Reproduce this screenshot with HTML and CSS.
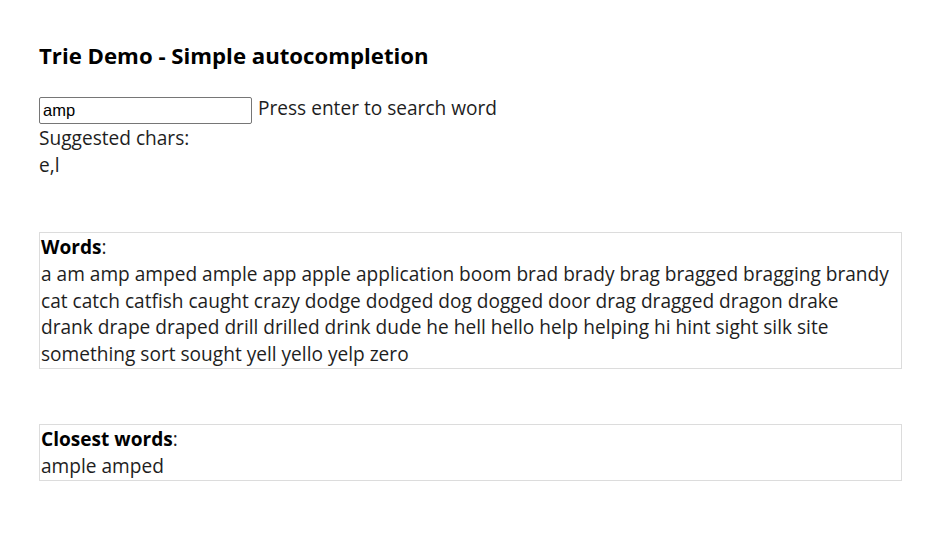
FILE: index.html
```html
<!DOCTYPE html>
<html>
<head>
<meta charset="utf-8">
<title>Trie Demo</title>
<link rel="stylesheet" href="styles.css">
</head>
<body>
<main class="page">
  <h1 class="title">Trie Demo - Simple autocompletion</h1>
  <div class="search-row">
    <input class="search-input" type="text" value="amp">
    <span class="hint">Press enter to search word</span>
  </div>
  <div class="suggest">
    <div class="line">Suggested chars:</div>
    <div class="line">e,l</div>
  </div>

  <section class="panel panel-words">
    <div class="line"><b class="label">Words</b>:</div>
    <div class="line">a am amp amped ample app apple application boom brad brady brag bragged bragging brandy cat catch catfish caught crazy dodge dodged dog dogged door drag dragged dragon drake drank drape draped drill drilled drink dude he hell hello help helping hi hint sight silk site something sort sought yell yello yelp zero</div>
  </section>

  <section class="panel panel-closest">
    <div class="line"><b class="label">Closest words</b>:</div>
    <div class="line">ample amped</div>
  </section>
</main>
</body>
</html>
```
FILE: styles.css
```css
html, body {
  margin: 0;
  padding: 0;
  background: #ffffff;
}

body {
  font-family: "Open Sans", "Noto Sans", sans-serif;
  font-size: 19.1px;
  line-height: 27px;
  color: #1e1e1e;
}

.page {
  padding: 41px 39px 0 39px;
}

.title {
  margin: 0;
  font-size: 22.2px;
  line-height: 30px;
  font-weight: 700;
  color: #000;
}

.search-row {
  margin-top: 23px;
  display: flex;
  align-items: flex-start;
  gap: 6px;
}

.search-input {
  box-sizing: border-box;
  width: 213px;
  height: 27px;
  margin: 3px 0 0 0;
  padding: 1px 3px;
  border: 1px solid #767676;
  border-radius: 2px;
  font-family: "Liberation Sans", Arial, sans-serif;
  font-size: 16.5px;
  color: #000;
  background: #fff;
  outline: none;
}

.hint {
  padding-top: 1px;
  line-height: 27px;
}

.suggest {
  margin-top: 1px;
}

.line {
  line-height: 27px;
}

.panel {
  border: 1px solid #dcdcdc;
  padding: 1px 8px 0 1px;
}

.panel .line {
  line-height: 26.8px;
}

.panel-words {
  margin-top: 53px;
}

.panel-closest {
  margin-top: 55px;
}

.label {
  font-weight: 700;
  color: #000;
}
```
